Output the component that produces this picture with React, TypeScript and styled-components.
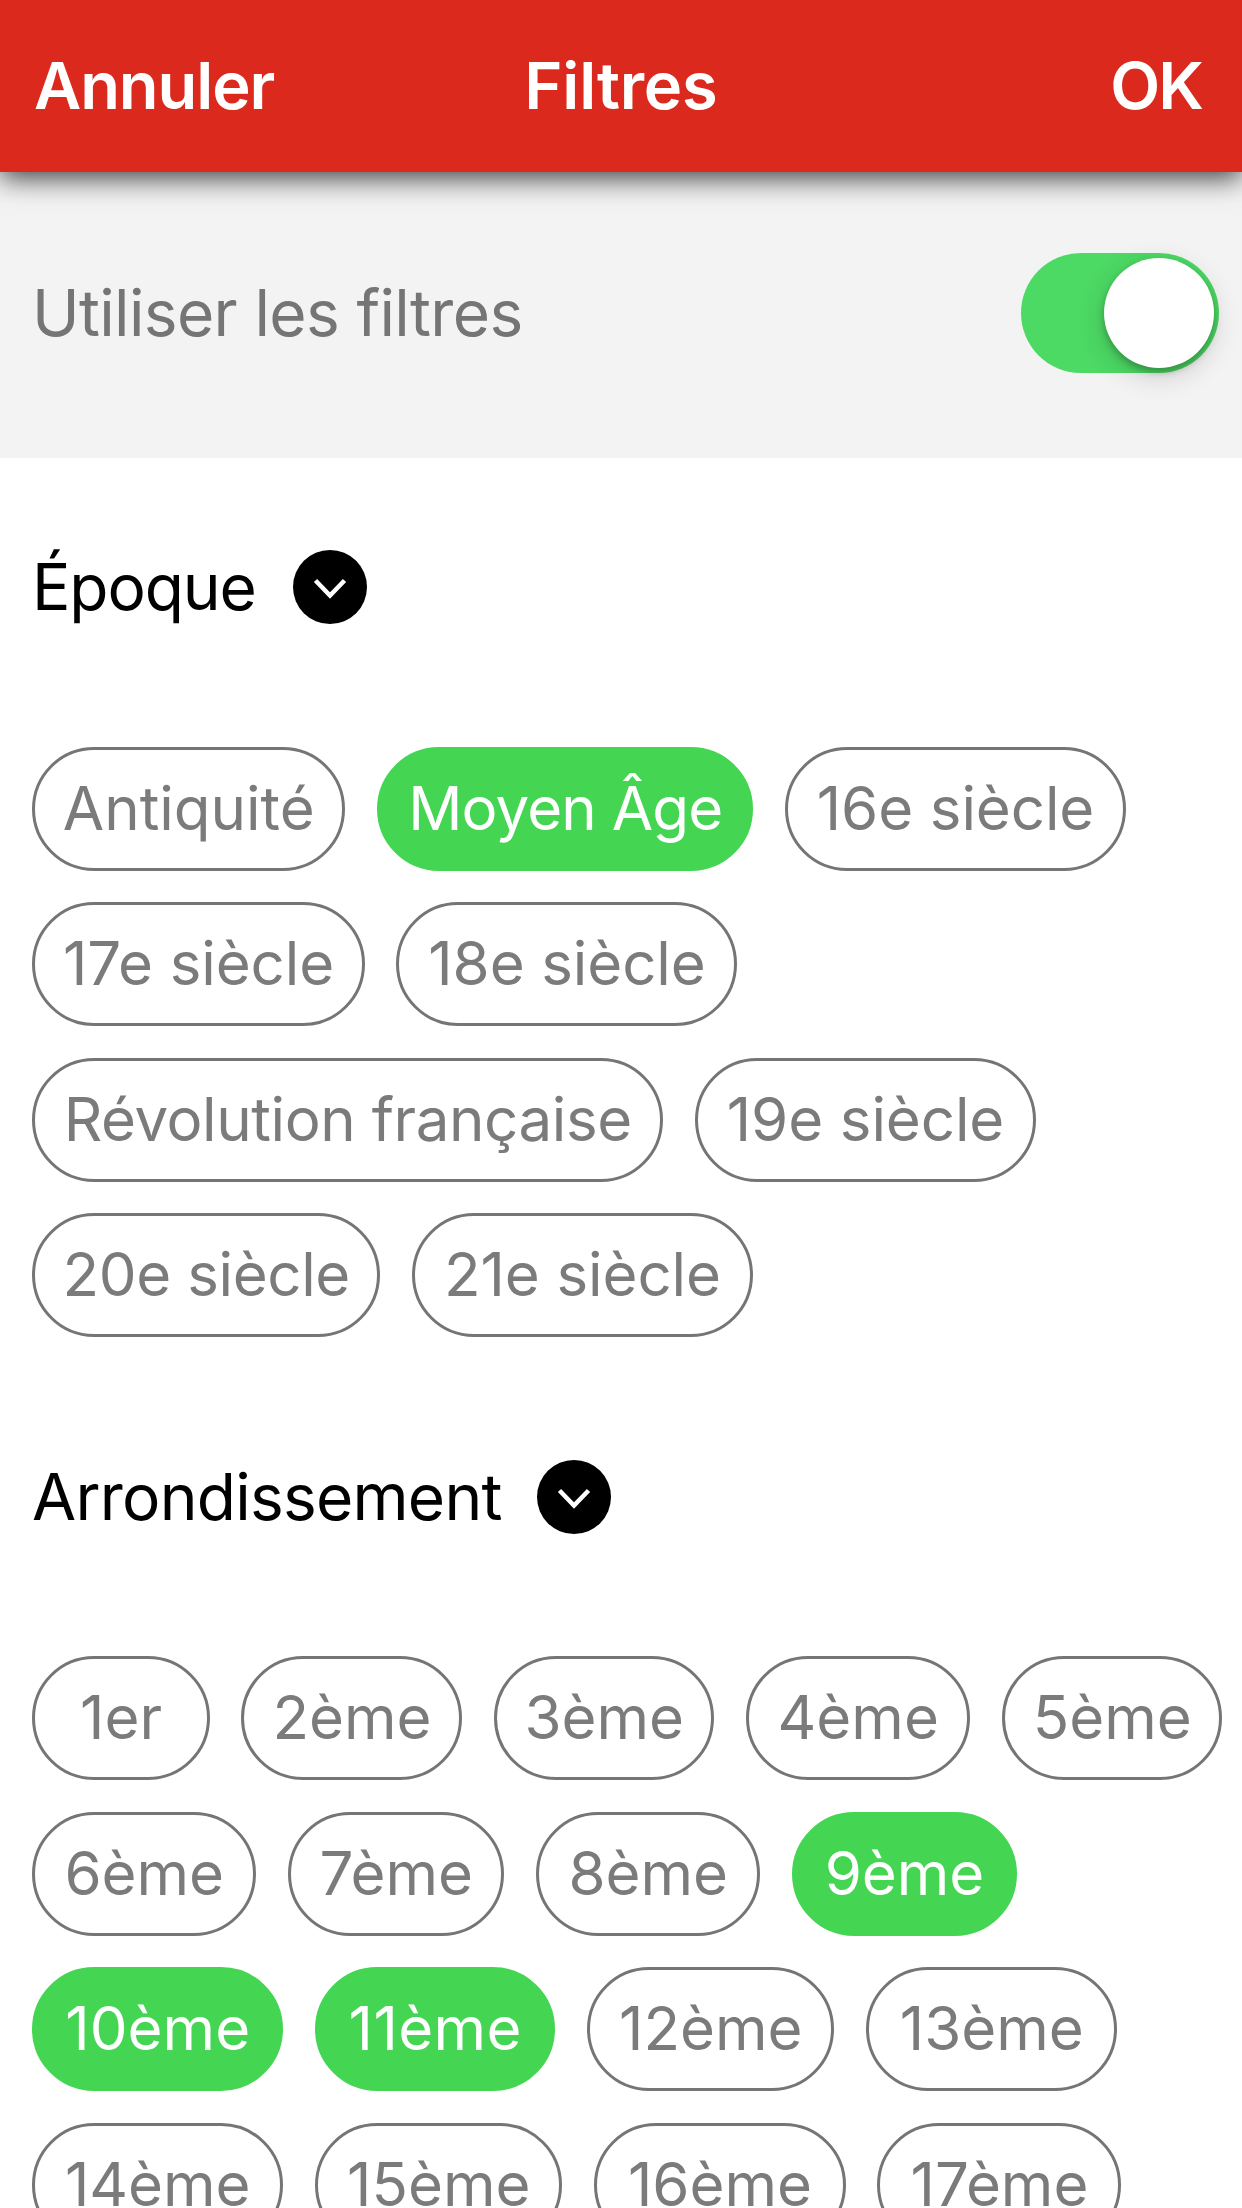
import React, { useState } from "react";
import styled, { createGlobalStyle } from "styled-components";

const GlobalStyle = createGlobalStyle`
  *, *::before, *::after { box-sizing: border-box; }
  body {
    margin: 0;
    background: #fff;
    font-family: Inter, "Liberation Sans", sans-serif;
  }
`;

const Screen = styled.div`
  width: 1242px;
  height: 2208px;
  overflow: hidden;
  background: #fff;
`;

const Header = styled.header`
  position: relative;
  z-index: 1;
  display: grid;
  grid-template-columns: 1fr auto 1fr;
  align-items: center;
  height: 171.5px;
  padding: 0 34px;
  background: #db291d;
  box-shadow: 0 6px 26px rgba(0, 0, 0, 0.75);
`;

const HeaderText = styled.span<{ $align?: string; $spacing?: number }>`
  justify-self: ${(p) => p.$align ?? "center"};
  padding-right: ${(p) => (p.$align === "end" ? 6 : 0)}px;
  color: #fff;
  font-size: 65px;
  font-weight: 600;
  line-height: 80px;
  letter-spacing: ${(p) => p.$spacing ?? 0}px;
  white-space: nowrap;
`;

const ToggleRow = styled.div`
  display: flex;
  align-items: flex-start;
  justify-content: space-between;
  height: 286.5px;
  padding: 81px 23.5px 0 32px;
  background: #f3f3f3;
`;

const ToggleLabel = styled.span`
  color: #757575;
  font-size: 64px;
  line-height: 120px;
  letter-spacing: -0.65px;
`;

const Switch = styled.button<{ $on: boolean }>`
  display: flex;
  justify-content: ${(p) => (p.$on ? "flex-end" : "flex-start")};
  width: 198px;
  height: 120px;
  padding: 5px;
  border: 0;
  border-radius: 60px;
  background: ${(p) => (p.$on ? "#4cd964" : "#d5d5d5")};
`;

const Knob = styled.span`
  width: 110px;
  height: 110px;
  border-radius: 50%;
  background: #fff;
  box-shadow: 0 8px 28px rgba(0, 0, 0, 0.16), 0 4px 7px rgba(0, 0, 0, 0.25);
`;

const Section = styled.section`
  height: 909.7px;
  padding: 91.5px 0 0 31.5px;
`;

const SectionTitle = styled.h2<{ $width: number; $spacing: number }>`
  display: flex;
  align-items: center;
  height: 75px;
  margin: 0 0 122px;
  padding-left: 0.5px;
  color: #000;
  font-size: 64px;
  font-weight: 400;
  letter-spacing: ${(p) => p.$spacing}px;

  > span {
    width: ${(p) => p.$width}px;
    padding-bottom: 1px;
    white-space: nowrap;
  }
`;

const Chips = styled.div`
  display: flex;
  flex-wrap: wrap;
  gap: 31.5px;
`;

const Chip = styled.button<{ $width: number; $spacing: number; $selected: boolean }>`
  display: flex;
  align-items: center;
  justify-content: center;
  width: ${(p) => p.$width}px;
  height: 124px;
  padding: 0 0 1.5px 1px;
  border: 3px solid ${(p) => (p.$selected ? "#44d653" : "#757575")};
  border-radius: 62px;
  background: ${(p) => (p.$selected ? "#44d653" : "#fff")};
  color: ${(p) => (p.$selected ? "#fff" : "#7b7b7b")};
  font: 400 60px/72px Inter, "Liberation Sans", sans-serif;
  letter-spacing: ${(p) => p.$spacing}px;
  white-space: nowrap;
`;

function ChevronBadge() {
  return (
    <svg width="74" height="74" viewBox="0 0 74 74" fill="none">
      <circle cx="37" cy="37" r="37" fill="#000" />
      <path d="M22.500 30.500 37 45.500l14.500-15" stroke="#fff" strokeWidth="4.500" />
    </svg>
  );
}

type Option = { label: string; width: number; spacing?: number };

const periods: Option[] = [
  { label: "Antiquité", width: 313.5 },
  { label: "Moyen Âge", width: 376.5, spacing: -0.9 },
  { label: "16e siècle", width: 341, spacing: -0.1 },
  { label: "17e siècle", width: 333, spacing: -0.1 },
  { label: "18e siècle", width: 341, spacing: -0.1 },
  { label: "Révolution française", width: 631.5, spacing: -0.4 },
  { label: "19e siècle", width: 341, spacing: -0.1 },
  { label: "20e siècle", width: 348.5, spacing: -0.4 },
  { label: "21e siècle", width: 341, spacing: -0.1 },
];

const districts: Option[] = [
  { label: "1er", width: 178 },
  { label: "2ème", width: 221 },
  { label: "3ème", width: 220.5 },
  { label: "4ème", width: 224.5 },
  { label: "5ème", width: 220.5 },
  { label: "6ème", width: 224.5 },
  { label: "7ème", width: 216.5 },
  { label: "8ème", width: 224.5 },
  { label: "9ème", width: 225 },
  { label: "10ème", width: 251.5 },
  { label: "11ème", width: 240.5, spacing: 0.4 },
  { label: "12ème", width: 247.5 },
  { label: "13ème", width: 251.5 },
  { label: "14ème", width: 251.5 },
  { label: "15ème", width: 247.5 },
  { label: "16ème", width: 252 },
  { label: "17ème", width: 244 },
];

export default function App() {
  const [enabled, setEnabled] = useState(true);
  const [selected, setSelected] = useState(["Moyen Âge", "9ème", "10ème", "11ème"]);

  const toggle = (label: string) =>
    setSelected((s) => (s.includes(label) ? s.filter((l) => l !== label) : [...s, label]));

  const renderChips = (options: Option[]) => (
    <Chips>
      {options.map((o) => (
        <Chip
          key={o.label}
          $width={o.width}
          $spacing={o.spacing ?? 0}
          $selected={selected.includes(o.label)}
          onClick={() => toggle(o.label)}
        >
          {o.label}
        </Chip>
      ))}
    </Chips>
  );

  return (
    <Screen>
      <GlobalStyle />
      <Header>
        <HeaderText $align="start" $spacing={-1.1}>Annuler</HeaderText>
        <HeaderText $spacing={-0.2}>Filtres</HeaderText>
        <HeaderText $align="end" $spacing={-2}>OK</HeaderText>
      </Header>
      <ToggleRow>
        <ToggleLabel>Utiliser les filtres</ToggleLabel>
        <Switch $on={enabled} onClick={() => setEnabled(!enabled)}>
          <Knob />
        </Switch>
      </ToggleRow>
      <Section>
        <SectionTitle $width={261} $spacing={-1.1}>
          <span>Époque</span>
          <ChevronBadge />
        </SectionTitle>
        {renderChips(periods)}
      </Section>
      <Section>
        <SectionTitle $width={505} $spacing={-0.75}>
          <span>Arrondissement</span>
          <ChevronBadge />
        </SectionTitle>
        {renderChips(districts)}
      </Section>
    </Screen>
  );
}
